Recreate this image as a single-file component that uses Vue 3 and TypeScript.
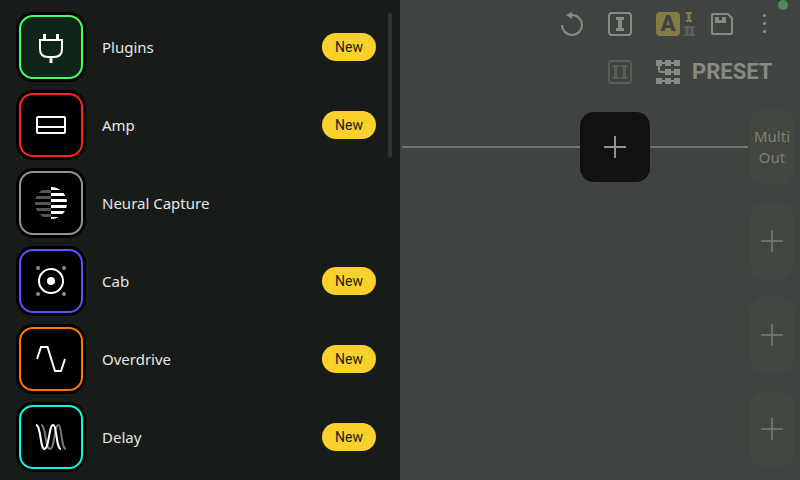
<script setup lang="ts">
type IconName = 'plugins' | 'amp' | 'capture' | 'cab' | 'overdrive' | 'delay'

interface Category {
  label: string
  icon: IconName
  isNew: boolean
}

const categories: Category[] = [
  { label: 'Plugins', icon: 'plugins', isNew: true },
  { label: 'Amp', icon: 'amp', isNew: true },
  { label: 'Neural Capture', icon: 'capture', isNew: false },
  { label: 'Cab', icon: 'cab', isNew: true },
  { label: 'Overdrive', icon: 'overdrive', isNew: true },
  { label: 'Delay', icon: 'delay', isNew: true },
]

const freeOutputs: number[] = [2, 3, 4]
</script>

<template>
  <div class="screen">
    <nav class="drawer">
      <ul class="list">
        <li v-for="c in categories" :key="c.icon">
          <button type="button" class="row">
            <span class="tile">
              <span class="frame" :class="c.icon">
                <svg v-if="c.icon === 'plugins'" viewBox="0 0 32 32" fill="none" stroke="#fff" stroke-width="2">
                  <path d="M5 9H27V18Q27 26 19 26H13Q5 26 5 18Z" />
                  <path d="M9.500 3V9M22.500 3V9M16 26V32" stroke-width="3" />
                </svg>
                <svg v-else-if="c.icon === 'amp'" viewBox="0 0 32 32" fill="none" stroke="#fff" stroke-width="2">
                  <rect x="2" y="8" width="28" height="16" rx="1" />
                  <path d="M2 18H30" />
                </svg>
                <svg v-else-if="c.icon === 'capture'" viewBox="0 0 32 32">
                  <clipPath id="disc"><circle cx="16" cy="16" r="16" /></clipPath>
                  <g clip-path="url(#disc)">
                    <path fill="#555" d="M0 3h16v3H0zM0 9h16v3H0zM0 15h16v3H0zM0 21h16v3H0zM0 27h16v3H0z" />
                    <path fill="#fff" d="M16 0h16v3H16zM16 6h16v3H16zM16 12h16v3H16zM16 18h16v3H16zM16 24h16v3H16zM16 30h16v2H16z" />
                  </g>
                </svg>
                <svg v-else-if="c.icon === 'cab'" viewBox="0 0 32 32">
                  <circle cx="16" cy="16" r="12" fill="none" stroke="#fff" stroke-width="2" />
                  <circle cx="16" cy="16" r="4" fill="#fff" />
                  <g fill="#8c8c8c">
                    <circle cx="3" cy="3" r="2" /><circle cx="29" cy="3" r="2" />
                    <circle cx="3" cy="29" r="2" /><circle cx="29" cy="29" r="2" />
                  </g>
                </svg>
                <svg v-else-if="c.icon === 'overdrive'" viewBox="0 0 32 32" fill="none" stroke="#fff" stroke-width="2">
                  <path d="M2 16L6 4H12.500L20 28H26L30 16" />
                </svg>
                <svg v-else viewBox="0 0 32 32" fill="none" stroke-width="2">
                  <path stroke="#777" d="M6 4C11 4 10 28 15 28S19 4 23.500 4C27 4 26 28 31 28" />
                  <path stroke="#fff" d="M1 4C6 4 5 28 9.500 28S14 4 18 4C22 4 21 28 26 28" />
                </svg>
              </span>
            </span>
            <span class="name">{{ c.label }}</span>
            <span v-if="c.isNew" class="badge">New</span>
          </button>
        </li>
      </ul>
      <span class="scroll-thumb"></span>
    </nav>

    <main class="stage">
      <span class="status"></span>
      <header class="toolbar">
        <button type="button" class="tool undo" aria-label="Undo">
          <svg viewBox="0 0 24 24" fill="none" stroke="#868b85" stroke-width="2">
            <path d="M2 13A10 10 0 1 0 12 3H10" />
            <path d="M6 3L12 0V7Z" fill="#868b85" stroke="none" />
          </svg>
        </button>
        <button type="button" class="tool" aria-label="Row one">
          <svg viewBox="0 0 24 24" fill="none" stroke="#868b85">
            <rect x="1" y="1" width="22" height="22" rx="3" stroke-width="2" />
            <path d="M8 6.500H16M8 17.500H16" stroke-width="3" />
            <path d="M12 6V18" stroke-width="4" />
          </svg>
        </button>
        <button type="button" class="tool scene" aria-label="Scene A">
          <span class="scene-letter">A</span>
          <svg class="scene-rows" viewBox="0 0 12 24" fill="none">
            <path stroke="#827c45" stroke-width="2" d="M3 1H9M3 9H9" />
            <path stroke="#827c45" stroke-width="3" d="M6 1V9" />
            <path stroke="#5b6059" stroke-width="2" d="M1 15H12M1 23H12" />
            <path stroke="#5b6059" stroke-width="3" d="M4 15V23M9 15V23" />
          </svg>
        </button>
        <button type="button" class="tool" aria-label="Save">
          <svg viewBox="0 0 24 24" fill="none" stroke="#868b85" stroke-width="2">
            <path d="M3 2H18L22 6V21Q22 22 21 22H3Q2 22 2 21V3Q2 2 3 2Z" />
            <path fill="#868b85" stroke="none" d="M5 5H9V8H12V5H16V11H5Z" />
          </svg>
        </button>
        <button type="button" class="tool" aria-label="More">
          <svg viewBox="0 0 24 24" fill="#868b85">
            <circle cx="12.500" cy="3.500" r="1.600" /><circle cx="12.500" cy="11.500" r="1.600" /><circle cx="12.500" cy="19.500" r="1.600" />
          </svg>
        </button>
        <button type="button" class="tool second" aria-label="Row two">
          <svg viewBox="0 0 24 24" fill="none" stroke="#585d55">
            <rect x="1" y="1" width="22" height="22" rx="3" stroke-width="2" />
            <path d="M4 6H11M13 6H20M4 18H11M13 18H20" stroke-width="2" />
            <path d="M7.500 6V18M16.500 6V18" stroke-width="3" />
          </svg>
        </button>
        <button type="button" class="preset">
          <svg viewBox="0 0 24 24" fill="#868b85">
            <path d="M0 0h6v6H0zM9 0h6v6H9zM18 0h6v6h-6zM9 9h6v6H9zM18 9h6v6h-6zM0 18h6v6H0zM9 18h6v6H9zM18 18h6v6h-6z" />
            <path fill="none" stroke="#868b85" stroke-width="2" d="M6 3H18M3 6V10Q3 12 5 12H18M6 21H18" />
          </svg>
          <span>PRESET</span>
        </button>
      </header>

      <section class="grid">
        <div class="lane">
          <span class="wire lead"></span>
          <button type="button" class="block" aria-label="Add block">
            <svg viewBox="0 0 22 22" stroke="#8f9492" stroke-width="2"><path d="M0 11H22M11 0V22" /></svg>
          </button>
          <span class="wire tail"></span>
        </div>
        <div class="outputs">
          <button type="button" class="output">Multi Out</button>
          <button v-for="n in freeOutputs" :key="n" type="button" class="output" aria-label="Add output">
            <svg viewBox="0 0 22 22" stroke="#6c706c" stroke-width="2"><path d="M0 11H22M11 0V22" /></svg>
          </button>
        </div>
      </section>
    </main>
  </div>
</template>

<style>
body {
  margin: 0;
  background: #404440;
}
</style>

<style scoped>
.screen {
  display: grid;
  grid-template-columns: 1fr 1fr;
  min-height: 100vh;
  background: #404440;
  font-family: "Noto Sans", "Open Sans", sans-serif;
  font-size: 15px;
}
button {
  margin: 0;
  padding: 0;
  border: 0;
  background: none;
  font: inherit;
  color: inherit;
  cursor: pointer;
}
svg {
  display: block;
}
.drawer {
  position: relative;
  background: #181c18;
  color: #e6e8e6;
}
.list {
  display: flex;
  flex-direction: column;
  gap: 8px;
  margin: 0;
  padding: 12px 24px 8px 16px;
  list-style: none;
}
.row {
  display: flex;
  align-items: center;
  gap: 16px;
  width: 100%;
  text-align: left;
}
.tile {
  padding: 3px;
  border-radius: 17px;
  background: #000;
}
.frame {
  display: grid;
  place-items: center;
  box-sizing: border-box;
  width: 64px;
  height: 64px;
  border: 2px solid;
  border-radius: 14px;
}
.frame svg {
  width: 32px;
  height: 32px;
}
.plugins {
  border-color: #43ff64;
  background: #10251a;
}
.amp {
  border-color: #ff2020;
}
.capture {
  border-color: #929292;
}
.cab {
  border-color: #654cff;
}
.overdrive {
  border-color: #ff7500;
}
.delay {
  border-color: #00ffdc;
}
.name {
  flex: 1;
}
.badge {
  width: 54px;
  border-radius: 14px;
  background: #fad02c;
  color: #181c18;
  font-family: Roboto, sans-serif;
  font-size: 14px;
  line-height: 28px;
  text-align: center;
}
.scroll-thumb {
  position: absolute;
  top: 13px;
  right: 8px;
  width: 4px;
  height: 145px;
  border-radius: 2px;
  background: #303431;
}
.stage {
  position: relative;
  color: #868b85;
}
.status {
  position: absolute;
  top: 0;
  right: 12px;
  width: 10px;
  height: 10px;
  border-radius: 50%;
  background: #518a58;
}
.toolbar {
  display: grid;
  grid-template-columns: 48px 48px 54px 48px 36px;
  grid-auto-rows: 48px;
  justify-content: end;
  align-items: center;
  padding-right: 18px;
  font-family: Roboto, sans-serif;
}
.tool {
  display: flex;
  justify-content: center;
  align-items: center;
}
.tool svg {
  width: 24px;
  height: 24px;
}
.scene {
  justify-content: flex-start;
  gap: 3px;
  padding-left: 12px;
}
.scene-letter {
  width: 24px;
  border-radius: 4px;
  background: #827c45;
  color: #404440;
  font-size: 22px;
  font-weight: 900;
  line-height: 24px;
}
.scene .scene-rows {
  width: 12px;
}
.second {
  grid-column: 2;
}
.preset {
  grid-column: 3 / -1;
  display: flex;
  align-items: center;
  gap: 12px;
  padding-left: 12px;
  font-size: 22px;
  font-weight: 700;
  line-height: 24px;
}
.preset svg {
  width: 24px;
  height: 24px;
}
.grid {
  display: flex;
  gap: 2px;
  padding: 13px 6px 13px 2px;
}
.lane {
  display: flex;
  flex: 1;
  align-items: center;
  height: 76px;
}
.wire {
  height: 2px;
  background: #71776e;
}
.lead {
  flex: 1;
}
.tail {
  width: 98px;
}
.block {
  display: grid;
  place-items: center;
  width: 70px;
  height: 70px;
  border-radius: 14px;
  background: #101110;
}
.block svg,
.output svg {
  width: 22px;
  height: 22px;
}
.outputs {
  display: flex;
  flex-direction: column;
  gap: 18px;
  width: 44px;
}
.output {
  display: grid;
  place-items: center;
  height: 76px;
  border-radius: 14px;
  background: #42483f;
  color: #7c817b;
  line-height: 21px;
  text-align: center;
}
</style>
